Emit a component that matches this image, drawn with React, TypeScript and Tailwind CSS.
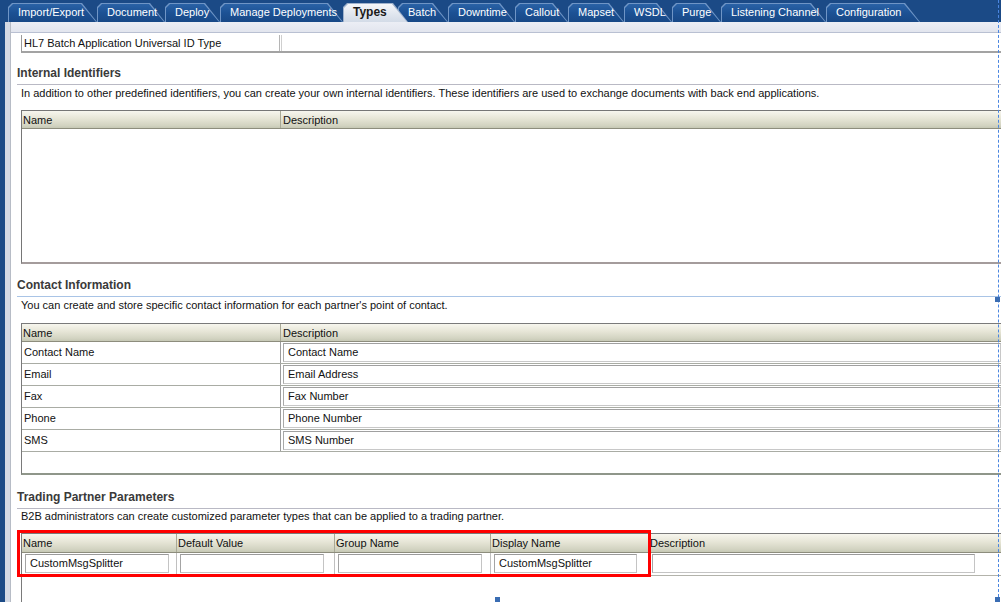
import React from "react";

const tabs: { label: string; w: number; active?: boolean }[] = [
  { label: "Import/Export", w: 89 },
  { label: "Document", w: 68 },
  { label: "Deploy", w: 55 },
  { label: "Manage Deployments", w: 123 },
  { label: "Types", w: 65, active: true },
  { label: "Batch", w: 50 },
  { label: "Downtime", w: 67 },
  { label: "Callout", w: 53 },
  { label: "Mapset", w: 56 },
  { label: "WSDL", w: 48 },
  { label: "Purge", w: 49 },
  { label: "Listening Channel", w: 105 },
  { label: "Configuration", w: 94 },
];

const clip =
  "[clip-path:polygon(0_4px,4px_0,calc(100%_-_15px)_0,100%_100%,0_100%)]";

function Tab({ label, w, active }: { label: string; w: number; active?: boolean }) {
  return (
    <div
      className={`relative h-[19px] shrink-0 ${active ? "z-10 mr-[-10px]" : ""}`}
      style={{ width: w }}
    >
      <div className={`absolute inset-0 ${clip} ${active ? "bg-[#9fb2cc]" : "bg-[#6f95c6]"}`} />
      <div
        className={`absolute left-[1px] right-[1px] top-[1px] bottom-0 ${clip} ${
          active
            ? "bg-[linear-gradient(to_bottom,#f4f6f9,#dfe5ee_60%,#d3dbe7)]"
            : "bg-[linear-gradient(to_bottom,#2a62a6,#1c5194_50%,#184886)]"
        }`}
      />
      <div
        className={`relative pl-[10px] leading-[19px] text-[11px] whitespace-nowrap ${
          active ? "font-bold text-[#1a1a1a] text-[12px]" : "text-white"
        }`}
      >
        {label}
      </div>
    </div>
  );
}

function Heading({ text, h, line }: { text: string; h: number; line: string }) {
  return (
    <div
      className={`flex items-end pb-[4px] border-b ${line}`}
      style={{ height: h }}
    >
      <span className="font-bold text-[12px] leading-[14px] text-[#3a3a3a]">{text}</span>
    </div>
  );
}

const headerBg =
  "bg-[linear-gradient(to_bottom,#f7f6ee,#e6e5d6_45%,#d2d3c1_85%,#c6c8b5)]";

function InputBox({ text, w }: { text?: string; w: number }) {
  return (
    <div
      className="h-[19px] border border-[#c4c4c4] border-t-[#9a9a9a] border-l-[#a4a4a4] bg-white pl-[4px] leading-[17px] whitespace-nowrap"
      style={{ width: w }}
    >
      {text}
    </div>
  );
}

export default function App() {
  const contacts = [
    ["Contact Name", "Contact Name"],
    ["Email", "Email Address"],
    ["Fax", "Fax Number"],
    ["Phone", "Phone Number"],
    ["SMS", "SMS Number"],
  ];
  const tpCols = [
    { label: "Name", w: 155, input: 144, val: "CustomMsgSplitter" },
    { label: "Default Value", w: 158, input: 144, val: "" },
    { label: "Group Name", w: 156, input: 144, val: "" },
    { label: "Display Name", w: 158, input: 143, val: "CustomMsgSplitter" },
    { label: "Description", w: 351, input: 323, val: "" },
  ];
  return (
    <div className="relative w-[1001px] h-[602px] overflow-hidden bg-[#1b4a86] font-['Liberation_Sans',Arial,sans-serif] text-[11px] text-[#111] flex flex-col">
      {/* tab bar */}
      <div className="h-[22px] pt-[3px] pl-[8px] flex shrink-0">
        {tabs.map((t) => (
          <Tab key={t.label} {...t} />
        ))}
      </div>

      {/* content */}
      <div className="flex-1 ml-[5px] bg-[#d3d9e4] pl-[5px] flex flex-col">
        <div className="flex-1 bg-white border-l border-[#b7bcc6] flex flex-col">
          <div className="h-[11px] shrink-0 bg-[linear-gradient(to_bottom,#eceef5,#e2e5ee)] border-b border-[#b9c0d2]" />
          <div className="pl-[6px] flex flex-col">
            {/* HL7 row */}
            <div className="ml-[4px] mt-[2px] h-[18px] flex border-l border-[#9a9a9a] border-b-2 border-b-[#a3a3a3]">
              <div className="w-[258px] pl-[2px] leading-[17px] border-r border-[#b5b5b5]">
                HL7 Batch Application Universal ID Type
              </div>
              <div className="w-[2px] border-r border-[#cfcfcf]" />
              <div className="flex-1" />
            </div>

            {/* Internal Identifiers */}
            <Heading text="Internal Identifiers" h={32} line="border-[#b9b9c4]" />
            <div className="h-[16px] pl-[4px] leading-[16px]">
              In addition to other predefined identifiers, you can create your own internal identifiers. These identifiers are used to exchange documents with back end applications.
            </div>
            <div className="ml-[4px] mt-[9px] h-[154px] border-l border-t border-[#767676] border-b-2 border-b-[#a49c9c] flex flex-col">
              <div className={`h-[18px] flex border-b border-[#8d8d7d] ${headerBg}`}>
                <div className="w-[259px] pl-[1px] leading-[18px] border-r border-[#a9a996]">Name</div>
                <div className="flex-1 pl-[2px] leading-[18px]">Description</div>
              </div>
              <div className="flex-1 bg-white" />
            </div>

            {/* Contact Information */}
            <Heading text="Contact Information" h={33} line="border-[#a9c4e6]" />
            <div className="h-[16px] pl-[4px] leading-[16px]">
              You can create and store specific contact information for each partner's point of contact.
            </div>
            <div className="ml-[4px] mt-[10px] h-[152px] border-l border-t border-[#7a7a7a] border-b-2 border-b-[#8f968a] flex flex-col">
              <div className={`h-[18px] flex border-b border-[#8d8d7d] ${headerBg}`}>
                <div className="w-[259px] pl-[1px] leading-[18px] border-r border-[#a9a996]">Name</div>
                <div className="flex-1 pl-[2px] leading-[18px]">Description</div>
              </div>
              {contacts.map(([n, d]) => (
                <div key={n} className="h-[22px] flex border-b border-[#a9aca4]">
                  <div className="w-[259px] pl-[2px] leading-[21px] border-r border-[#9c9c9c]">{n}</div>
                  <div className="flex-1 pl-[2px] pt-[1px]">
                    <div className="h-[19px] border border-[#c8c8c8] border-t-[#a0a0a0] border-l-[#a8a8a8] pl-[4px] leading-[17px]">
                      {d}
                    </div>
                  </div>
                </div>
              ))}
              <div className="flex-1" />
            </div>

            {/* Trading Partner Parameters */}
            <Heading text="Trading Partner Parameters" h={34} line="border-[#b9b9c4]" />
            <div className="h-[14px] pl-[4px] leading-[14px]">
              B2B administrators can create customized parameter types that can be applied to a trading partner.
            </div>
            <div className="ml-[4px] mt-[10px] h-[80px] border-l border-t border-[#7a7a7a] flex flex-col">
              <div className={`h-[19px] flex border-b border-[#8d8d7d] ${headerBg}`}>
                {tpCols.map((c, i) => (
                  <div
                    key={c.label}
                    className={`shrink-0 pl-[1px] leading-[19px] ${i < 4 ? "border-r border-[#a9a996]" : ""}`}
                    style={{ width: c.w }}
                  >
                    {c.label}
                  </div>
                ))}
                <div className="flex-1" />
              </div>
              <div className="h-[23px] flex border-b border-[#b3b3ab]">
                {tpCols.map((c, i) => (
                  <div
                    key={c.label}
                    className={`shrink-0 pl-[3px] pt-[1px] ${i < 4 ? "border-r border-[#c0c0c0]" : ""}`}
                    style={{ width: c.w }}
                  >
                    <InputBox text={c.val} w={c.input} />
                  </div>
                ))}
                <div className="flex-1" />
              </div>
              <div className="flex-1" />
            </div>
          </div>
        </div>
      </div>

      {/* overlays: selection frame */}
      <div className="absolute left-[998px] top-0 h-[602px] border-l border-dashed border-[#4b86e0]" />
      <div className="absolute left-[995px] top-[297px] w-[5px] h-[5px] bg-[#3a6db3]" />
      <div className="absolute left-[995px] top-[597px] w-[5px] h-[5px] bg-[#3a6db3]" />
      <div className="absolute left-[495px] top-[597px] w-[5px] h-[5px] bg-[#3a6db3]" />

      {/* red highlight */}
      <div className="absolute left-[17px] top-[530px] w-[634px] h-[47px] border-[3px] border-[#ff0000]" />
    </div>
  );
}
